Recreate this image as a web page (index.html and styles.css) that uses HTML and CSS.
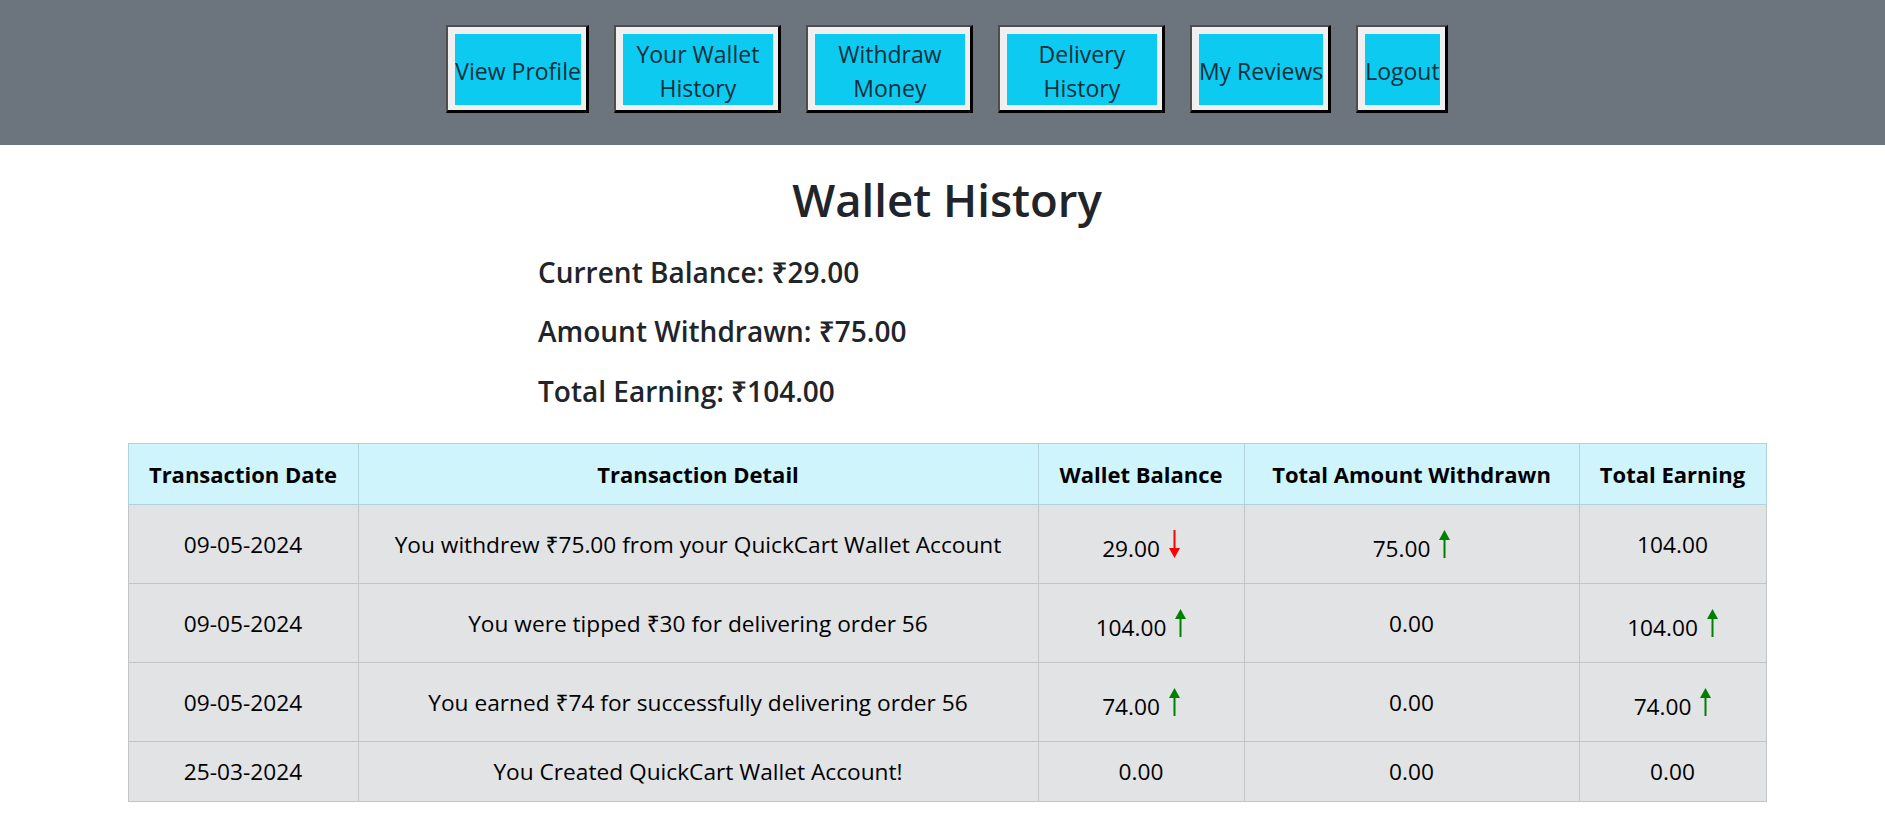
FILE: index.html
```html
<!DOCTYPE html>
<html lang="en">
<head>
<meta charset="utf-8">
<title>Wallet History</title>
<link rel="stylesheet" href="styles.css">
</head>
<body>
<nav class="topnav">
  <a class="navbtn" href="#"><span class="navbtn-label">View Profile</span></a>
  <a class="navbtn" href="#"><span class="navbtn-label">Your Wallet History</span></a>
  <a class="navbtn" href="#"><span class="navbtn-label">Withdraw Money</span></a>
  <a class="navbtn" href="#"><span class="navbtn-label">Delivery History</span></a>
  <a class="navbtn" href="#"><span class="navbtn-label">My Reviews</span></a>
  <a class="navbtn" href="#"><span class="navbtn-label">Logout</span></a>
</nav>
<main class="page">
  <h1 class="title">Wallet History</h1>
  <div class="stats">
    <h3 class="stat">Current Balance: ₹29.00</h3>
    <h3 class="stat">Amount Withdrawn: ₹75.00</h3>
    <h3 class="stat">Total Earning: ₹104.00</h3>
  </div>
  <table class="wallet-table">
    <colgroup>
      <col class="col-date">
      <col class="col-detail">
      <col class="col-balance">
      <col class="col-withdrawn">
      <col class="col-earning">
    </colgroup>
    <thead>
      <tr>
        <th>Transaction Date</th>
        <th>Transaction Detail</th>
        <th>Wallet Balance</th>
        <th>Total Amount Withdrawn</th>
        <th>Total Earning</th>
      </tr>
    </thead>
    <tbody>
      <tr>
        <td>09-05-2024</td>
        <td>You withdrew ₹75.00 from your QuickCart Wallet Account</td>
        <td>29.00 <svg class="arrow" viewBox="0 0 11 28" width="11" height="28"><path class="arrow-down" d="M4.5 0 H6.5 V18 H11 L5.5 28 L0 18 H4.5 Z"/></svg></td>
        <td>75.00 <svg class="arrow" viewBox="0 0 11 28" width="11" height="28"><path class="arrow-up" d="M5.5 0 L11 10 H6.5 V28 H4.5 V10 H0 Z"/></svg></td>
        <td>104.00</td>
      </tr>
      <tr>
        <td>09-05-2024</td>
        <td>You were tipped ₹30 for delivering order 56</td>
        <td>104.00 <svg class="arrow" viewBox="0 0 11 28" width="11" height="28"><path class="arrow-up" d="M5.5 0 L11 10 H6.5 V28 H4.5 V10 H0 Z"/></svg></td>
        <td>0.00</td>
        <td>104.00 <svg class="arrow" viewBox="0 0 11 28" width="11" height="28"><path class="arrow-up" d="M5.5 0 L11 10 H6.5 V28 H4.5 V10 H0 Z"/></svg></td>
      </tr>
      <tr>
        <td>09-05-2024</td>
        <td>You earned ₹74 for successfully delivering order 56</td>
        <td>74.00 <svg class="arrow" viewBox="0 0 11 28" width="11" height="28"><path class="arrow-up" d="M5.5 0 L11 10 H6.5 V28 H4.5 V10 H0 Z"/></svg></td>
        <td>0.00</td>
        <td>74.00 <svg class="arrow" viewBox="0 0 11 28" width="11" height="28"><path class="arrow-up" d="M5.5 0 L11 10 H6.5 V28 H4.5 V10 H0 Z"/></svg></td>
      </tr>
      <tr>
        <td>25-03-2024</td>
        <td>You Created QuickCart Wallet Account!</td>
        <td>0.00</td>
        <td>0.00</td>
        <td>0.00</td>
      </tr>
    </tbody>
  </table>
</main>
</body>
</html>
```
FILE: styles.css
```css
* { box-sizing: border-box; }

body {
  margin: 0;
  font-family: "Open Sans", "Noto Sans", sans-serif;
  color: #212529;
  background: #fff;
}

.topnav {
  display: flex;
  justify-content: center;
  align-items: stretch;
  gap: 25px;
  background: #6c757d;
  padding: 25px 0 32px 9px;
}

.navbtn {
  display: flex;
  background: #f0f0f0;
  border-style: solid;
  border-width: 2px 3px 3px 2px;
  border-color: #4d4d4d #000 #000 #4d4d4d;
  padding: 7px 5px 5px 7px;
  text-decoration: none;
}

.navbtn-label {
  display: flex;
  align-items: center;
  justify-content: center;
  text-align: center;
  max-width: 150px;
  padding-top: 3px;
  background: #0dcaf0;
  color: #0e2f3b;
  font-size: 23px;
  line-height: 34px;
}

.page {
  padding-left: 9px;
  padding-bottom: 20px;
}

.title {
  text-align: center;
  margin: 27px 0 29px;
  font-size: 45.5px;
  font-weight: 600;
  line-height: 1.2;
  color: #212529;
}

.stats {
  width: 818px;
  margin: 0 auto 35px;
  display: flex;
  flex-direction: column;
  gap: 26px;
}

.stat {
  margin: 0;
  font-size: 28px;
  font-weight: 600;
  line-height: 1.2;
  color: #212529;
}

.wallet-table {
  border-collapse: collapse;
  table-layout: fixed;
  width: 1638px;
  margin: 0 auto;
  font-size: 22.7px;
  line-height: 35px;
  color: #000;
  text-align: center;
}

.col-date { width: 230px; }
.col-detail { width: 680px; }
.col-balance { width: 206px; }
.col-withdrawn { width: 335px; }
.col-earning { width: 187px; }

.wallet-table th,
.wallet-table td {
  padding: 12px 8px;
  border: 1px solid #c3c4c6;
  vertical-align: middle;
}

.wallet-table thead th {
  background: #cff4fc;
  border-color: #b3d2d9;
  font-size: 22px;
  line-height: 36px;
  font-weight: 700;
}

.wallet-table tbody td {
  background: #e2e3e5;
  font-weight: 400;
}

.arrow {
  display: inline-block;
  margin: 13px 0 13px 3px;
  vertical-align: -14px;
}

.arrow-up { fill: #008000; }
.arrow-down { fill: #ff0000; }
```
